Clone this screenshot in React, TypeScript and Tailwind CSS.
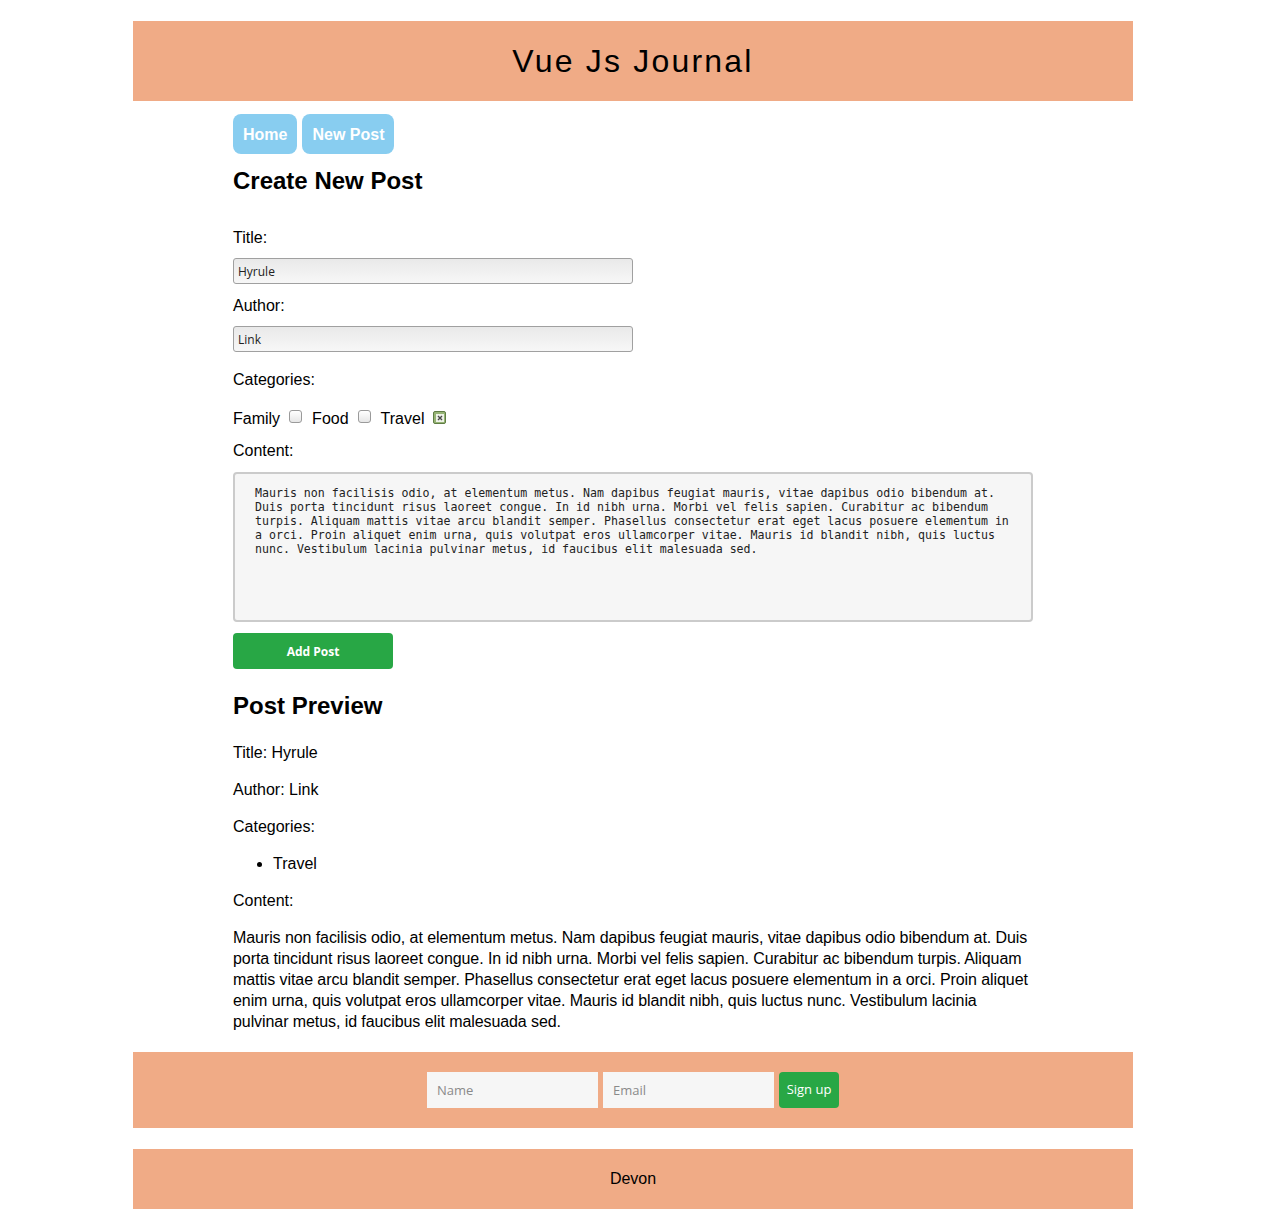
import { useState } from "react"

const lorem =
  "Mauris non facilisis odio, at elementum metus. Nam dapibus feugiat mauris, vitae dapibus odio bibendum at. Duis porta tincidunt risus laoreet congue. In id nibh urna. Morbi vel felis sapien. Curabitur ac bibendum turpis. Aliquam mattis vitae arcu blandit semper. Phasellus consectetur erat eget lacus posuere elementum in a orci. Proin aliquet enim urna, quis volutpat eros ullamcorper vitae. Mauris id blandit nibh, quis luctus nunc. Vestibulum lacinia pulvinar metus, id faucibus elit malesuada sed."

function Box({ checked }: { checked: boolean }) {
  if (!checked) {
    return (
      <span className="inline-block size-[13px] rounded-[3px] border border-[#9a9a9a] bg-gradient-to-b from-white to-[#e6e6e6]" />
    )
  }
  return (
    <span className="flex size-[13px] items-center justify-center rounded-[2px] border border-[#5f7d44] bg-[#97b476]">
      <svg width="8" height="8" viewBox="0 0 8 8" className="bg-[#eef2e8]">
        <path d="M2 2l4 4M6 2l-4 4" stroke="#4a4a4a" strokeWidth="1.4" />
      </svg>
    </span>
  )
}

export default function App() {
  const [cats] = useState([
    { name: "Family", checked: false },
    { name: "Food", checked: false },
    { name: "Travel", checked: true },
  ])

  return (
    <div className="min-h-[1230px] bg-white pt-[21px] font-['Liberation_Sans',Arial,sans-serif] text-black">
      <div className="mx-auto w-[1000px]">
        <header className="flex h-20 items-center justify-center bg-[#f0ab86]">
          <h1 className="text-[32px] leading-none tracking-[2.2px]">Vue Js Journal</h1>
        </header>

        <main className="flex flex-col items-start px-[100px] text-[16px] leading-[21px]">
          <nav className="mt-[13px] flex gap-[5px]">
            <a className="flex h-10 items-center rounded-[8px] bg-[#88cdf0] px-[10px] font-bold text-white">
              Home
            </a>
            <a className="flex h-10 items-center rounded-[8px] bg-[#88cdf0] px-[10px] font-bold text-white">
              New Post
            </a>
          </nav>

          <h2 className="mt-[13px] text-[24px] leading-[28px] font-bold">Create New Post</h2>

          <label className="mt-[32px]">Title:</label>
          <input
            readOnly
            value="Hyrule"
            className="mt-[10px] h-[26px] w-[400px] rounded-[3px] border border-[#a0a0a0] bg-gradient-to-b from-[#e9e9e9] to-[#f7f7f7] px-[4px] font-['Open_Sans',sans-serif] text-[12px] text-[#222] outline-none"
          />
          <label className="mt-[11px]">Author:</label>
          <input
            readOnly
            value="Link"
            className="mt-[10px] h-[26px] w-[400px] rounded-[3px] border border-[#a0a0a0] bg-gradient-to-b from-[#e9e9e9] to-[#f7f7f7] px-[4px] font-['Open_Sans',sans-serif] text-[12px] text-[#222] outline-none"
          />

          <div className="mt-[17px]">Categories:</div>
          <div className="mt-[18px] flex items-center">
            {cats.map((c) => (
              <span key={c.name} className="flex items-center">
                <span>{c.name}</span>
                <span className="mr-[10px] ml-[9px] -translate-y-[1px]">
                  <Box checked={c.checked} />
                </span>
              </span>
            ))}
          </div>

          <div className="mt-[11px]">Content:</div>
          <textarea
            readOnly
            spellCheck={false}
            value={lorem}
            className="mt-[11px] h-[150px] w-[800px] resize-none rounded-[4px] border-2 border-[#cbcbcb] bg-[#f6f6f6] pt-[12px] pr-[14px] pl-[20px] font-['DejaVu_Sans_Mono',monospace] text-[11.6px] leading-[14px] text-[#222] outline-none"
          />

          <button
            type="button"
            className="mt-[11px] h-9 w-40 rounded-[4px] bg-[#28a745] font-['Open_Sans',sans-serif] text-[12px] font-bold text-white"
          >
            Add Post
          </button>

          <h2 className="mt-[23px] text-[24px] leading-[28px] font-bold">Post Preview</h2>
          <p className="mt-[22px]">Title: Hyrule</p>
          <p className="mt-[16px]">Author: Link</p>
          <p className="mt-[16px]">Categories:</p>
          <ul className="mt-[16px] list-disc pl-10">
            {cats
              .filter((c) => c.checked)
              .map((c) => (
                <li key={c.name}>{c.name}</li>
              ))}
          </ul>
          <p className="mt-[16px]">Content:</p>
          <p className="mt-[16px] w-[800px] tracking-[-0.08px]">{lorem}</p>
        </main>

        <section className="mt-[20px] flex h-[76px] items-center justify-center gap-[5px] bg-[#f0ab86] font-['Open_Sans',sans-serif] text-[13px]">
          <input
            placeholder="Name"
            className="h-9 w-[171px] bg-[#f6f6f6] px-[10px] text-[#333] outline-none placeholder:text-[#8a8a8a]"
          />
          <input
            placeholder="Email"
            className="h-9 w-[171px] bg-[#f6f6f6] px-[10px] text-[#333] outline-none placeholder:text-[#8a8a8a]"
          />
          <button type="button" className="h-9 w-[60px] rounded-[4px] bg-[#28a745] text-white">
            Sign up
          </button>
        </section>

        <footer className="mt-[21px] flex h-[60px] items-center justify-center bg-[#f0ab86] text-[16px]">
          Devon
        </footer>
      </div>
    </div>
  )
}
